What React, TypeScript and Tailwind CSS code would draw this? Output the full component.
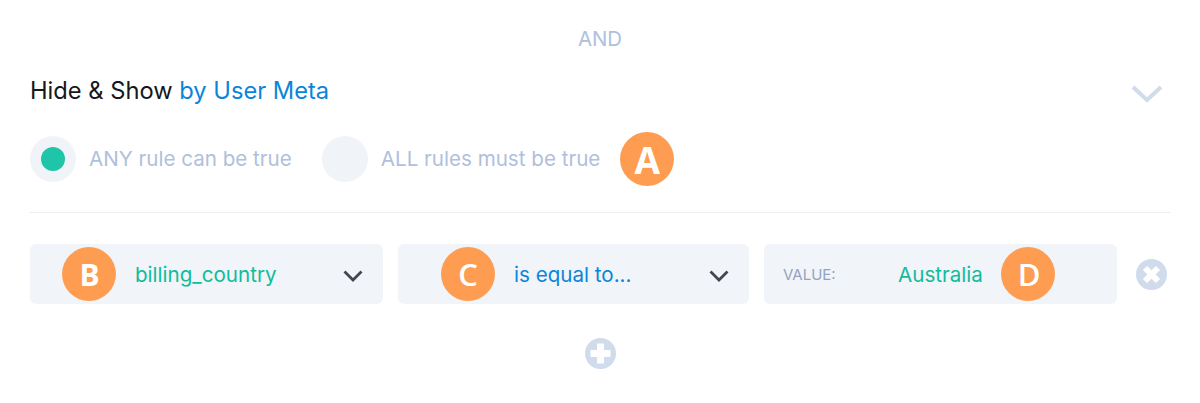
import React from 'react';

const Badge = ({ letter, className = '' }: { letter: string; className?: string }) => (
  <span
    className={`flex h-[54px] w-[54px] shrink-0 items-center justify-center rounded-full bg-[#fe9d52] pt-[1px] leading-none text-white font-['Open_Sans',sans-serif] ${className}`}
  >
    {letter}
  </span>
);

const Chevron = () => (
  <svg width="20" height="12" viewBox="0 0 20 12" fill="none" className="mt-[3px] shrink-0">
    <path d="M1.5 1.5L10 10L18.5 1.5" stroke="#43474d" strokeWidth="2.8" />
  </svg>
);

const Radio = ({ checked, label }: { checked?: boolean; label: string }) => (
  <div className="flex items-center gap-[13px]">
    <span className="flex h-[46px] w-[46px] items-center justify-center rounded-full bg-[#f0f3f8]">
      {checked && <span className="h-6 w-6 rounded-full bg-[#1fc5a8]" />}
    </span>
    <span className="pt-[1px] text-[20.6px] leading-none text-[#b0c0dc]">{label}</span>
  </div>
);

export default function App() {
  return (
    <div className="h-[403px] w-[1200px] overflow-hidden bg-white px-[30px] font-['Inter',sans-serif]">
      <div className="pt-[27px] text-center text-[20.4px] leading-[24px] text-[#b0c0dc]">AND</div>

      <div className="mt-[27px] flex h-[24px] items-center justify-between">
        <h2 className="pt-[1px] text-[23.7px] font-normal leading-none text-[#16181b]">
          Hide &amp; Show <span className="text-[#0a85d9]">by User Meta</span>
        </h2>
        <svg width="32" height="18" viewBox="0 0 32 18" fill="none" className="mr-[7px] mt-[7px]">
          <path d="M2 2L16 15L30 2" stroke="#d0dbeb" strokeWidth="4" />
        </svg>
      </div>

      <div className="mt-[30px] flex h-[54px] items-center">
        <Radio checked label="ANY rule can be true" />
        <div className="ml-[30px]">
          <Radio label="ALL rules must be true" />
        </div>
        <Badge letter="A" className="ml-[20px] text-[37px] font-bold" />
      </div>

      <hr className="mt-[26px] border-0 border-t border-[#eaedf2]" />

      <div className="mt-[31px] flex h-[60px] items-center gap-[15px]">
        <div className="relative flex h-full w-[353px] items-center justify-between rounded-md bg-[#f1f4f9] pl-[105px] pr-[20px]">
          <Badge letter="B" className="absolute left-[32px] top-[3px] pl-[1px] text-[30px] font-bold" />
          <span className="pt-[2px] text-[20.6px] text-[#10bc9c]">billing_country</span>
          <Chevron />
        </div>
        <div className="relative flex h-full w-[351px] items-center justify-between rounded-md bg-[#f1f4f9] pl-[116px] pr-[20px]">
          <Badge letter="C" className="absolute left-[43px] top-[3px] text-[31px] font-semibold" />
          <span className="pt-[2px] text-[20.6px] text-[#0a85d9]">is equal to...</span>
          <Chevron />
        </div>
        <div className="relative flex h-full w-[353px] items-center rounded-md bg-[#f1f4f9] pl-[19px]">
          <span className="w-[115px] pt-[2px] text-[15px] text-[#94a3c1]">VALUE:</span>
          <span className="pt-[2px] text-[20.6px] text-[#10bc9c]">Australia</span>
          <Badge letter="D" className="absolute left-[237px] top-[3px] pl-[2px] text-[31px] font-semibold" />
        </div>
        <svg width="31" height="31" viewBox="0 0 31 31" className="ml-[4px] shrink-0">
          <circle cx="15.5" cy="15.5" r="15.5" fill="#d0dbeb" />
          <path d="M9 9L22 22M22 9L9 22" stroke="#fff" strokeWidth="6" />
        </svg>
      </div>

      <div className="mt-[34px] flex justify-center">
        <svg width="31" height="31" viewBox="0 0 31 31">
          <circle cx="15.5" cy="15.5" r="15.5" fill="#d0dbeb" />
          <path d="M15.5 5.5V25.5M5.5 15.5H25.5" stroke="#fff" strokeWidth="7" />
        </svg>
      </div>
    </div>
  );
}
